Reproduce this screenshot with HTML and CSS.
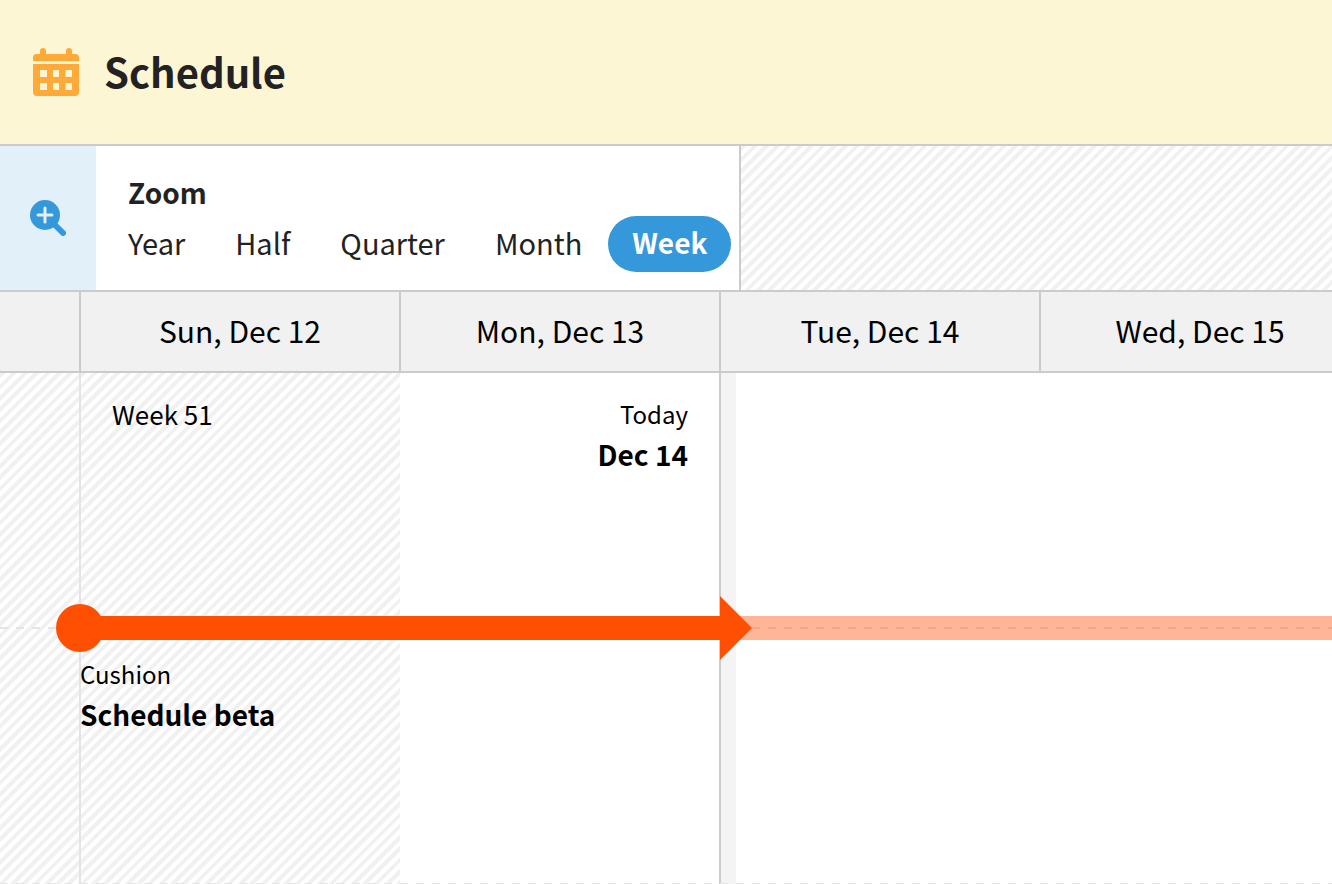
FILE: index.html
```html
<!DOCTYPE html>
<html lang="en">
<head>
<meta charset="utf-8">
<meta name="viewport" content="width=device-width, initial-scale=1">
<title>Schedule</title>
<link rel="stylesheet" href="styles.css">
</head>
<body>

<header class="header">
  <svg class="header__icon" width="48" height="48" viewBox="0 0 48 48" aria-hidden="true">
    <path fill="#ffa938" d="M1 13V9.500Q1 6 4.500 6H8V3a3 3 0 0 1 6 0V6H34V3a3 3 0 0 1 6 0V6H43.500Q47 6 47 9.500V13Z"/>
    <path fill="#ffa938" fill-rule="evenodd" d="M1 16H47V44Q47 48 43 48H5Q1 48 1 44ZM8 22V29H15V22ZM21 22V29H27V22ZM33.500 22V29H40V22ZM8 35V42H15V35ZM21 35V42H27V35ZM33.500 35V42H40V35Z"/>
  </svg>
  <h1>Schedule</h1>
</header>

<div class="toolbar">
  <div class="toolbar__icon">
    <svg width="36" height="36" viewBox="0 0 36 36" aria-hidden="true">
      <circle cx="15" cy="15" r="15" fill="#3598db"/>
      <path d="M24 24L33 33" stroke="#3598db" stroke-width="6" stroke-linecap="round"/>
      <path d="M15 8V22M8 15H22" stroke="#e2f0fa" stroke-width="3" stroke-linecap="round"/>
    </svg>
  </div>
  <div class="zoom">
    <h2 id="zoom_title">Zoom</h2>
    <div class="zoom__options" role="group" aria-labelledby="zoom_title">
      <button class="button">Year</button>
      <button class="button">Half</button>
      <button class="button">Quarter</button>
      <button class="button">Month</button>
      <button class="button button--active" aria-pressed="true">Week</button>
    </div>
  </div>
  <div class="toolbar__rest stripes"></div>
</div>

<div class="days">
  <div class="day"></div>
  <div class="day">Sun, Dec 12</div>
  <div class="day">Mon, Dec 13</div>
  <div class="day">Tue, Dec 14</div>
  <div class="day">Wed, Dec 15</div>
</div>

<main class="timeline">
  <div class="weekend weekend--sat stripes"></div>
  <div class="weekend weekend--sun stripes"></div>
  <div class="today"></div>

  <p class="week">Week 51</p>
  <div class="today__label">
    <p>Today</p>
    <h3>Dec 14</h3>
  </div>

  <section class="project">
    <div class="bar">
      <div class="bar__done"></div>
      <div class="bar__left"></div>
    </div>
    <div class="project__label">
      <p>Cushion</p>
      <h3>Schedule beta</h3>
    </div>
  </section>

  <div class="lane lane--first"></div>
  <div class="lane lane--second"></div>
</main>

</body>
</html>
```

FILE: styles.css
```css
* {
  box-sizing: border-box;
}

body {
  display: flex;
  flex-direction: column;
  height: 100vh;
  margin: 0;
  overflow: hidden;
  background: #fff;
  color: #000;
  font-family: "Noto Sans CJK JP", "Noto Sans", sans-serif;
  font-size: 28px;
  line-height: 40px;
}

h1, h2, h3, p {
  margin: 0;
}

h2, h3 {
  font-size: 28px;
}

p {
  font-size: 24px;
}

.stripes {
  background: repeating-linear-gradient(135deg, #f1f1f1 0, #f1f1f1 4px, #fff 4px, #fff 8px);
}

.header {
  display: flex;
  align-items: center;
  gap: 24px;
  height: 146px;
  padding: 0 32px;
  flex: none;
  background: #fdf6d5;
  border-bottom: 2px solid #cbcbcb;
  color: #222;
}

.header h1 {
  padding-bottom: 2px;
  font-size: 40px;
  line-height: 56px;
}

.toolbar {
  display: flex;
  flex: none;
  border-bottom: 2px solid #cbcbcb;
  color: #222;
}

.toolbar__icon {
  display: flex;
  align-items: center;
  justify-content: center;
  width: 96px;
  background: #e2f0fa;
}

.toolbar__rest {
  flex: 1;
}

.zoom {
  padding: 26px 8px 18px;
  border-right: 2px solid #cbcbcb;
}

.zoom h2 {
  padding: 0 24px;
}

.zoom__options {
  display: flex;
  gap: 2px;
  margin-top: 4px;
}

.button {
  height: 56px;
  padding: 0 24px 4px;
  border: none;
  border-radius: 28px;
  background: none;
  color: inherit;
  font: inherit;
  font-size: 29px;
  cursor: pointer;
}

.button--active {
  background: #3598db;
  color: #fff;
  font-size: 28px;
  font-weight: bold;
}

.days {
  display: grid;
  flex: none;
  grid-template-columns: 79px repeat(4, 320px);
  background: #f1f1f1;
  border-bottom: 2px solid #cbcbcb;
}

.day {
  height: 79px;
  font-size: 30px;
  line-height: 77px;
  text-align: center;
}

.day + .day {
  border-left: 2px solid #cbcbcb;
}

.timeline {
  display: grid;
  flex: 1;
  grid-template-columns: 80px 320px 320px 1fr;
  grid-template-rows: 256px 256px;
}

.weekend {
  grid-row: 1 / 3;
}

.weekend--sat {
  grid-column: 1;
  border-right: 1px solid #e4e4e4;
}

.weekend--sun {
  grid-column: 2;
  border-left: 1px solid #e4e4e4;
}

.today {
  grid-column: 4;
  grid-row: 1 / 3;
  width: 17px;
  margin-left: -1px;
  background: #f4f4f4;
  border-left: 2px solid #cbcbcb;
}

.week {
  grid-column: 2;
  grid-row: 1;
  padding: 21px 32px;
  font-size: 26px;
}

.today__label {
  grid-column: 3;
  grid-row: 1;
  padding: 21px 32px;
  text-align: right;
}

.project {
  z-index: 1;
  grid-column: 2 / 5;
  grid-row: 2;
  margin-top: -13px;
}

.bar {
  display: flex;
  height: 24px;
}

.bar__done {
  position: relative;
  width: 640px;
  background: #ff4f03;
}

.bar__done:before {
  content: "";
  position: absolute;
  top: -12px;
  left: -24px;
  width: 48px;
  height: 48px;
  border-radius: 50%;
  background: #ff4f03;
}

.bar__done:after {
  content: "";
  position: absolute;
  top: -20px;
  left: 100%;
  border: 32px solid transparent;
  border-left-color: #ff4f03;
  border-right: none;
}

.bar__left {
  flex: 1;
  background: repeating-linear-gradient(90deg, #f0a98a 0, #f0a98a 8px, transparent 8px, transparent 16px) 0 11px / 100% 2px no-repeat #ffb597;
}

.project__label {
  padding-top: 14px;
}

/* dashed rule under each lane */
.lane {
  grid-column: 1 / 5;
  background: repeating-linear-gradient(90deg, #e4e4e4 0, #e4e4e4 8px, transparent 8px, transparent 16px) 0 100% / 100% 2px no-repeat;
}

.lane--first {
  grid-row: 1;
}

.lane--second {
  grid-row: 2;
}
```
